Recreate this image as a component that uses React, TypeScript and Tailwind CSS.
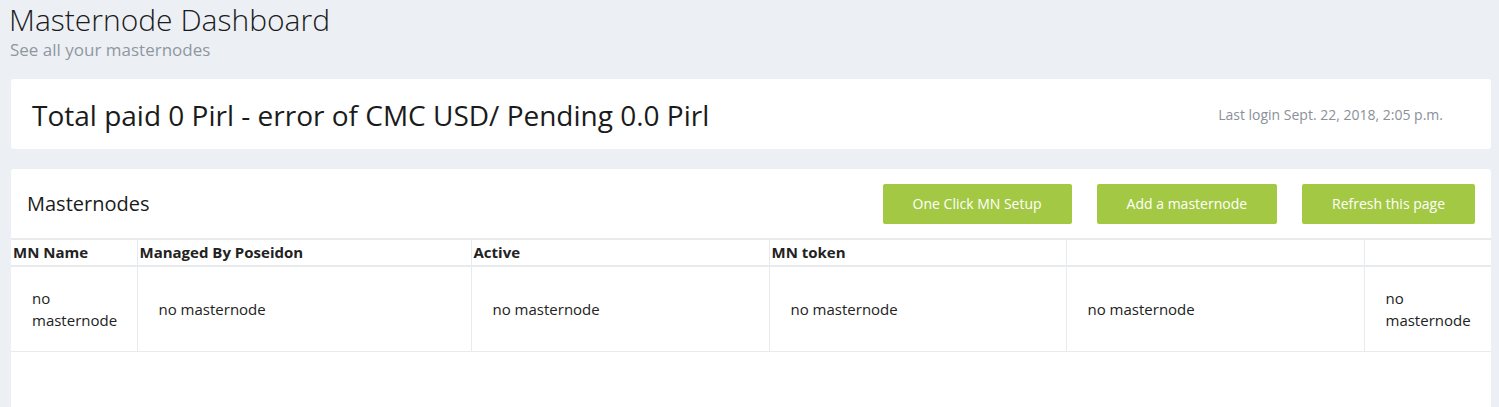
const columns = [
    { label: "MN Name", width: "w-[126px]" },
    { label: "Managed By Poseidon", width: "w-[334px]" },
    { label: "Active", width: "w-[298px]" },
    { label: "MN token", width: "w-[297px]" },
    { label: "", width: "w-[298px]" },
    { label: "", width: "w-[127px]" },
];

const buttons = ["One Click MN Setup", "Add a masternode", "Refresh this page"];

export default function App() {
    return (
        <div className="w-full h-[407px] overflow-hidden bg-[#ecf0f5] text-[#1b1b1b] font-['Open_Sans',sans-serif]">
            <div className="pl-[9px] pt-[1px]">
                <h1 className="text-[30px] font-light leading-[38px]">Masternode Dashboard</h1>
                <p className="text-[17px] leading-[22px] text-[#9097a0] pl-px">See all your masternodes</p>
            </div>
            <div className="ml-[11px] mr-[8px] mt-[18px] h-[70px] bg-white rounded-[3px] flex items-center justify-between pl-[21px] pr-[48px]">
                <div className="text-[28px] leading-[36px] pt-[2px]">Total paid 0 Pirl - error of CMC USD/ Pending 0.0 Pirl</div>
                <div className="text-[14px] text-[#8a9099]">Last login Sept. 22, 2018, 2:05 p.m.</div>
            </div>
            <div className="ml-[11px] mr-[8px] mt-[20px] bg-white rounded-t-[3px] h-[300px]">
                <div className="h-[69px] flex items-center justify-between pl-[16px] pr-[16px]">
                    <div className="text-[20px] leading-[26px]">Masternodes</div>
                    <div className="flex gap-[25px]">
                        {buttons.map((b, i) => (
                            <button key={i} className="h-[40px] px-[30px] bg-[#a3c944] text-white text-[14px] rounded-[2px]">{b}</button>
                        ))}
                    </div>
                </div>
                <table className="table-fixed border-collapse w-[1480px] text-[15px]">
                    <colgroup>
                        {columns.map((c, i) => (<col key={i} className={c.width} />))}
                    </colgroup>
                    <thead>
                        <tr className="h-[27px] border-t-2 border-b-2 border-[#e8ebee]">
                            {columns.map((c, i) => (
                                <th key={i} className={"text-left font-bold px-[2px] text-[#222] " + (i > 0 ? "border-l border-[#e8ebee]" : "")}>{c.label}</th>
                            ))}
                        </tr>
                    </thead>
                    <tbody>
                        <tr className="h-[85px] border-b border-[#e8ebee]">
                            {columns.map((c, i) => (
                                <td key={i} className={"pl-[21px] pr-[10px] leading-[22px] text-[#222] " + (i > 0 ? "border-l border-[#e8ebee]" : "")}>no masternode</td>
                            ))}
                        </tr>
                    </tbody>
                </table>
            </div>
        </div>
    )
}
